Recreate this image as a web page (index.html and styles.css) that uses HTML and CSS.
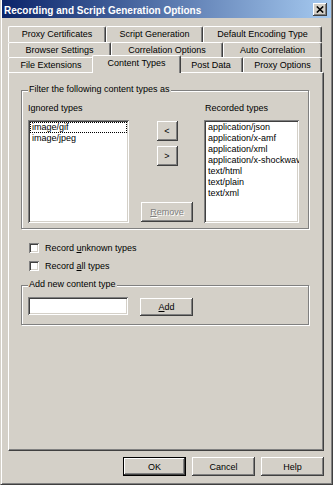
FILE: index.html
```html
<!DOCTYPE html>
<html lang="en">
<head>
  <meta charset="UTF-8" />
  <title>Recording and Script Generation Options</title>
  <link rel="stylesheet" href="styles.css">
</head>
<body>
  <div class="window">
    <!-- Title bar -->
    <div class="titlebar">
      <span class="title">Recording and Script Generation Options</span>
      <button class="close" title="Close">
        <svg width="8" height="7" viewBox="0 0 8 7"><path d="M0.8 0.5 L7.2 6.5 M7.2 0.5 L0.8 6.5" stroke="#000" stroke-width="1.6" fill="none"/></svg>
      </button>
    </div>

    <div class="content">
      <!-- Tabs, three rows -->
      <div class="tabs">
        <div class="tab-row row1">
          <div class="tab">Proxy Certificates</div>
          <div class="tab">Script Generation</div>
          <div class="tab">Default Encoding Type</div>
        </div>
        <div class="tab-row row2">
          <div class="tab">Browser Settings</div>
          <div class="tab">Correlation Options</div>
          <div class="tab">Auto Correlation</div>
        </div>
        <div class="tab-row row3">
          <div class="tab">File Extensions</div>
          <div class="tab active">Content Types</div>
          <div class="tab">Post Data</div>
          <div class="tab">Proxy Options</div>
        </div>
      </div>

      <!-- Tab page -->
      <div class="panel">
        <div class="group filter">
          <span class="group-title">Filter the following content types as</span>
          <div class="filter-grid">
            <div class="label">Ignored types</div>
            <div></div>
            <div class="label recorded">Recorded types</div>

            <div class="listbox">
              <div class="item focused">image/gif</div>
              <div class="item">image/jpeg</div>
            </div>

            <div class="mover">
              <button class="btn small">&lt;</button>
              <button class="btn small">&gt;</button>
              <button class="btn remove" disabled><u>R</u>emove</button>
            </div>

            <div class="listbox">
              <div class="item">application/json</div>
              <div class="item">application/x-amf</div>
              <div class="item">application/xml</div>
              <div class="item">application/x-shockwave-flash</div>
              <div class="item">text/html</div>
              <div class="item">text/plain</div>
              <div class="item">text/xml</div>
            </div>
          </div>
        </div>

        <div class="checks">
          <label class="check"><span class="box"></span><span>Record <u>u</u>nknown types</span></label>
          <label class="check"><span class="box"></span><span>Record <u>a</u>ll types</span></label>
        </div>

        <div class="group add">
          <span class="group-title">Add new content type</span>
          <div class="add-row">
            <input class="field" type="text">
            <button class="btn add-btn"><u>A</u>dd</button>
          </div>
        </div>
      </div>

      <!-- Dialog buttons -->
      <div class="actions">
        <button class="btn wide default">OK</button>
        <button class="btn wide">Cancel</button>
        <button class="btn wide">Help</button>
      </div>
    </div>
  </div>
</body>
</html>
```

FILE: styles.css
```css
* {
  margin: 0;
  padding: 0;
  box-sizing: border-box;
}

html, body {
  background: #d4d0c8;
  font-family: 'Liberation Sans', Arial, sans-serif;
  font-size: 9px;
  line-height: 11px;
  color: #000;
}

/* Window frame */
.window {
  width: 333px;
  height: 485px;
  border-left: 1px solid #d4d0c8;
  border-right: 1px solid #404040;
  border-bottom: 1px solid #404040;
  box-shadow: inset 1px 0 #fff, inset -1px -1px #808080;
  background: #d4d0c8;
}

.titlebar {
  height: 18px;
  margin: 0 1px;
  display: flex;
  align-items: center;
  justify-content: space-between;
  background: linear-gradient(to right, #0a246a, #a6caf0);
  padding: 1px 4px 0 2px;
}

.title {
  color: #fff;
  font-weight: bold;
  font-size: 10px;
  padding-top: 1px;
}

.close {
  width: 14px;
  height: 13px;
  border: none;
  background: #d4d0c8;
  display: flex;
  align-items: center;
  justify-content: center;
  box-shadow: inset -1px -1px #404040, inset 1px 1px #fff, inset -2px -2px #808080;
}

.content {
  padding: 0 8px 0 7px;
}

/* Tabs */
.tabs {
  margin: 8px 2px 0 0;
}

.tab-row {
  display: grid;
}

.row1 {
  height: 16px;
  grid-template-columns: 98px 97px 1fr;
}

.row2 {
  height: 15px;
  grid-template-columns: 103px 112px 1fr;
}

.row3 {
  height: 15px;
  grid-template-columns: 86px 85px 64px 1fr;
}

.tab {
  display: flex;
  align-items: center;
  justify-content: center;
  border-top: 1px solid #fff;
  border-left: 1px solid #fff;
  border-right: 1px solid #404040;
  border-radius: 2px 2px 0 0;
  box-shadow: inset -1px 0 #808080;
  background: #d4d0c8;
  white-space: nowrap;
}

.tab.active {
  position: relative;
  z-index: 1;
  margin: -2px -2px -1px -2px;
  padding-bottom: 2px;
}

/* Tab page */
.panel {
  width: 316px;
  height: 379px;
  border: 1px solid;
  border-color: #fff #404040 #404040 #fff;
  box-shadow: inset -1px -1px #808080;
  padding: 17px 12px 0 12px;
}

.group {
  position: relative;
  width: 288px;
  border: 1px solid #808080;
  box-shadow: inset 1px 1px #fff, 1px 1px #fff;
}

.group-title {
  position: absolute;
  top: -7px;
  left: 6px;
  padding: 0 1px;
  background: #d4d0c8;
  white-space: nowrap;
}

.filter {
  height: 139px;
  padding: 12px 0 0 6px;
}

.filter-grid {
  display: grid;
  grid-template-columns: 101px 75px 95px;
  grid-template-rows: 11px 103px;
  row-gap: 6px;
}

.label.recorded {
  padding-left: 1px;
}

.listbox {
  background: #fff;
  padding: 2px;
  overflow: hidden;
  box-shadow: inset 1px 1px #808080, inset -1px -1px #fff, inset 2px 2px #404040, inset -2px -2px #d4d0c8;
}

.item {
  height: 11px;
  padding-left: 2px;
  white-space: nowrap;
}

.item.focused {
  outline: 1px dotted #000;
  outline-offset: -1px;
}

.mover {
  display: flex;
  flex-direction: column;
  align-items: center;
  gap: 5px;
  padding: 1px 0 1px 1px;
}

/* Buttons */
.btn {
  font-family: inherit;
  font-size: 9px;
  color: #000;
  background: #d4d0c8;
  border: none;
  box-shadow: inset -1px -1px #404040, inset 1px 1px #fff, inset -2px -2px #808080;
}

.btn.small {
  width: 21px;
  height: 20px;
}

.btn.remove {
  width: 52px;
  height: 20px;
  margin-top: auto;
  color: #808080;
  text-shadow: 1px 1px #fff;
}

.btn.wide {
  width: 63px;
  height: 19px;
}

.btn.default {
  border: 1px solid #000;
}

/* Checkboxes */
.checks {
  margin: 10px 0 10px 8px;
}

.check {
  height: 18px;
  display: flex;
  align-items: center;
  gap: 6px;
}

.box {
  width: 10px;
  height: 10px;
  background: #fff;
  box-shadow: inset 1px 1px #808080, inset -1px -1px #fff, inset 2px 2px #404040, inset -2px -2px #d4d0c8;
}

/* Add new content type */
.add {
  height: 40px;
  padding: 11px 0 0 6px;
}

.add-row {
  display: flex;
  align-items: flex-start;
  gap: 12px;
}

.field {
  width: 100px;
  height: 18px;
  border: none;
  background: #fff;
  box-shadow: inset 1px 1px #808080, inset -1px -1px #fff, inset 2px 2px #404040, inset -2px -2px #d4d0c8;
}

.add-btn {
  width: 53px;
  height: 18px;
  margin-top: 1px;
}

.actions {
  display: flex;
  justify-content: flex-end;
  gap: 6px;
  margin-top: 6px;
}
```
